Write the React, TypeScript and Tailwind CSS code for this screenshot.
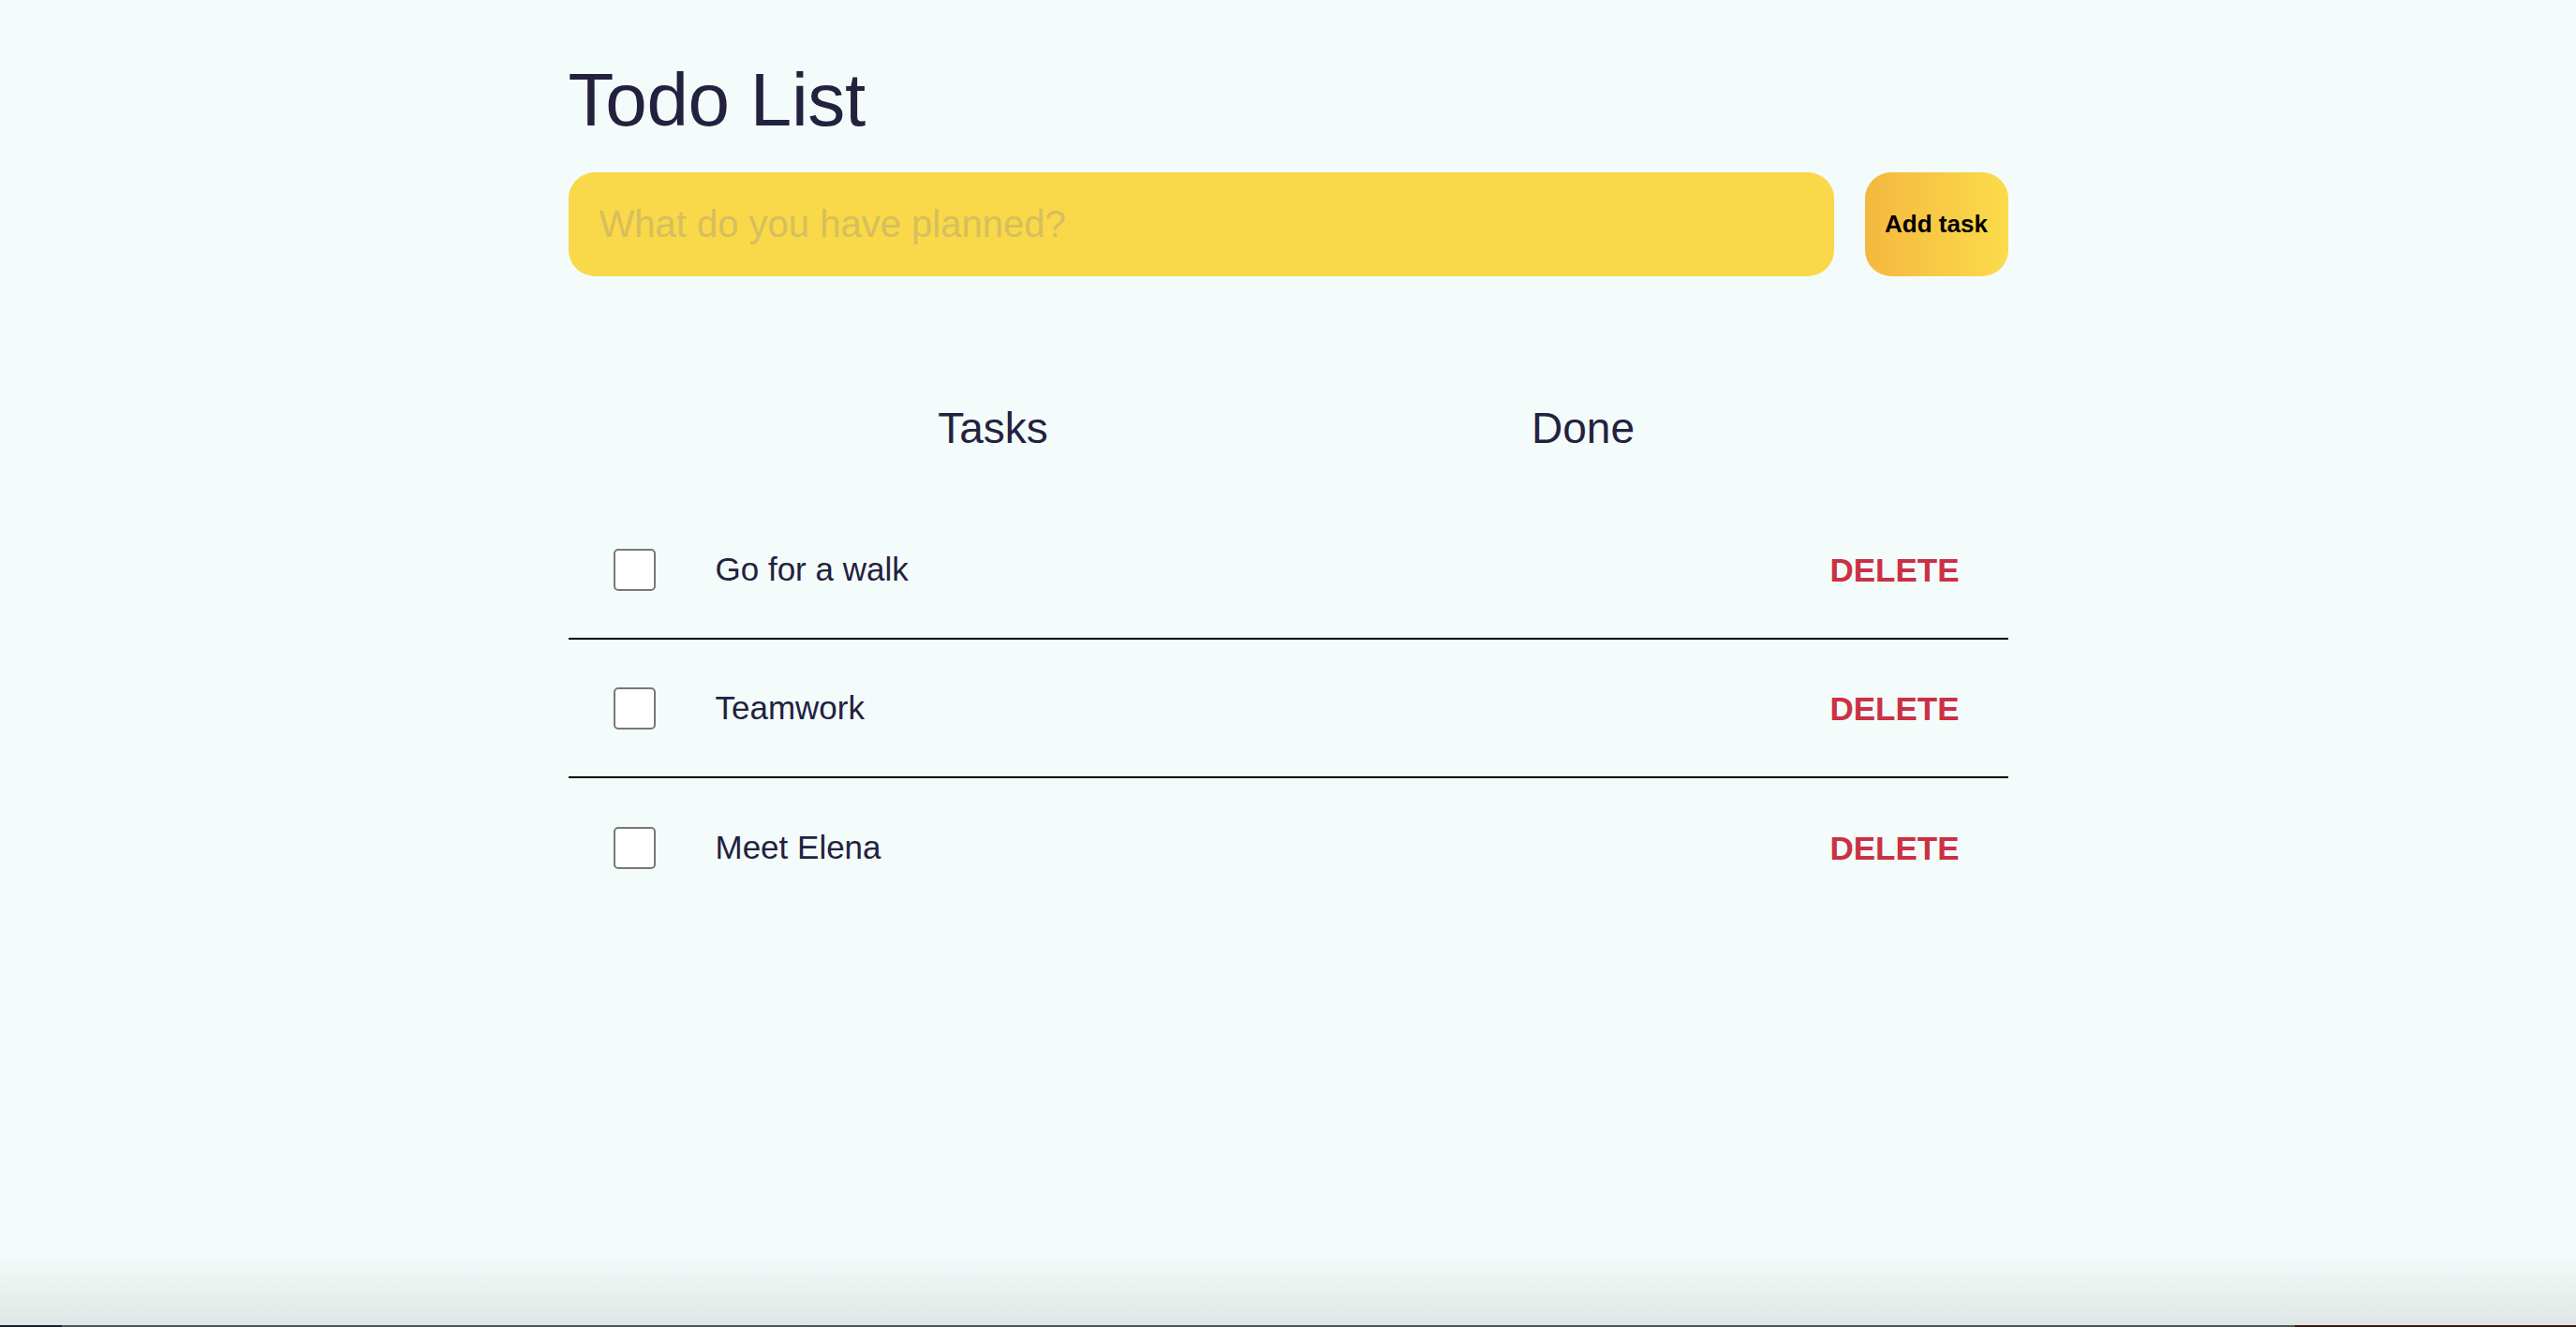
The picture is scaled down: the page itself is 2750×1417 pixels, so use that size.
import React from "react";

const tasks = ["Go for a walk", "Teamwork", "Meet Elena"];

export default function App() {
  return (
    <div
      className="h-[1417px] w-full bg-[#f3fcfa] flex flex-col overflow-hidden"
      style={{ fontFamily: '"Liberation Sans", Arial, Helvetica, sans-serif' }}
    >
      <div className="w-[1537px] mx-auto pt-[67px] flex flex-col">
        <h1 className="text-[80px] leading-[80px] font-light tracking-[-0.3px] text-[#24213f]">Todo List</h1>

        <div className="mt-[37px] flex items-stretch gap-[33px] h-[111px]">
          <input
            type="text"
            placeholder="What do you have planned?"
            className="flex-1 h-full rounded-[28px] bg-[#f9d84a] px-[33px] text-[40px] text-[#24213f] placeholder:text-[#d6bf5c] outline-none"
          />
          <button className="w-[153px] h-full rounded-[28px] bg-gradient-to-r from-[#f4b83f] to-[#fbdb4b] text-[26px] font-bold text-black">
            Add task
          </button>
        </div>

        <div className="mt-[139px] flex justify-center">
          <div className="w-[630px] text-center text-[46px] leading-[46px] text-[#24213f]">Tasks</div>
          <div className="w-[630px] text-center text-[46px] leading-[46px] text-[#24213f]">Done</div>
        </div>

        <div className="mt-[55px] flex flex-col">
          {tasks.map((t, i) => (
            <div
              key={t}
              className={
                "h-[148px] flex items-center pl-[48px] pr-[52px] " +
                (i < tasks.length - 1 ? "border-b-2 border-black" : "")
              }
            >
              <input
                type="checkbox"
                className="appearance-none w-[45px] h-[45px] border-2 border-[#787878] rounded-[5px] bg-white shrink-0"
              />
              <span className="ml-[64px] flex-1 text-[35px] text-[#24213f]">{t}</span>
              <button className="text-[35px] font-bold text-[#cc3044] leading-none">DELETE</button>
            </div>
          ))}
        </div>
      </div>

      <div className="flex-1 flex flex-col justify-end">
        <div className="h-[75px] bg-gradient-to-b from-transparent to-[#dfe6e5]" />
        <div className="h-[2px] flex">
          <div className="w-[66px] bg-[#0f2236]" />
          <div className="flex-1 bg-[#50565a]" />
          <div className="w-[300px] bg-[#3a1a0c]" />
        </div>
      </div>
    </div>
  );
}
